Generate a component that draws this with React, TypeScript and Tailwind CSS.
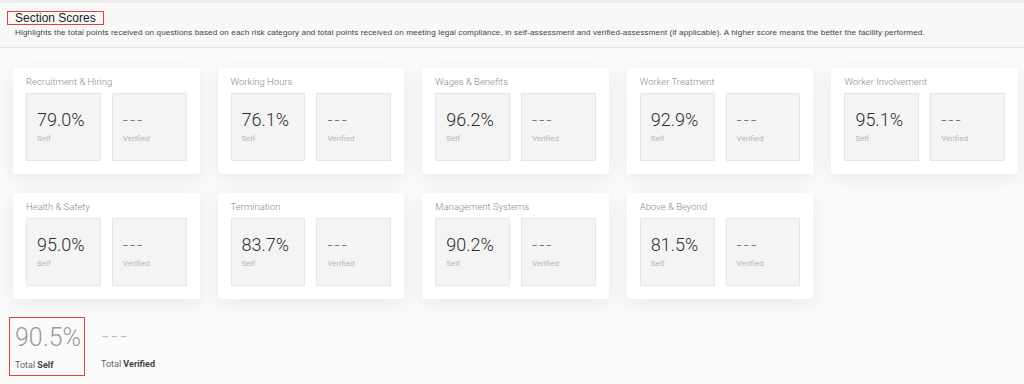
import React from 'react';

type Score = { title: string; self: string };

const row1: Score[] = [
  { title: 'Recruitment & Hiring', self: '79.0%' },
  { title: 'Working Hours', self: '76.1%' },
  { title: 'Wages & Benefits', self: '96.2%' },
  { title: 'Worker Treatment', self: '92.9%' },
  { title: 'Worker Involvement', self: '95.1%' },
];

const row2: Score[] = [
  { title: 'Health & Safety', self: '95.0%' },
  { title: 'Termination', self: '83.7%' },
  { title: 'Management Systems', self: '90.2%' },
  { title: 'Above & Beyond', self: '81.5%' },
];

function ScoreBox({ value, label, muted }: { value: string; label: string; muted?: boolean }) {
  return (
    <div className="flex h-[68px] flex-col border border-[#e6e6e6] bg-[#f4f4f4] pl-[10px] pt-[15px]">
      <div
        className={`h-[22px] text-[18px] font-light leading-[22px] ${
          muted ? 'tracking-[2px] text-[#777]' : 'text-[#2e2e2e]'
        }`}
      >
        {value}
      </div>
      <div className="mt-[3px] text-[8px] leading-[10px] text-[#b5b5b5]">{label}</div>
    </div>
  );
}

function ScoreCard({ s }: { s: Score }) {
  return (
    <div className="rounded-[3px] bg-white px-[13px] pb-[13px] pt-[8px] shadow-[0_4px_18px_rgba(0,0,0,0.07)]">
      <div className="mb-[5px] h-[12px] text-[9.5px] font-light leading-[12px] text-[#8a8a8a]">{s.title}</div>
      <div className="grid grid-cols-2 gap-[11px]">
        <ScoreBox value={s.self} label="Self" />
        <ScoreBox value="---" label="Verified" muted />
      </div>
    </div>
  );
}

export default function App() {
  return (
    <div className="h-[384px] w-[1024px] overflow-hidden bg-[#fafafa] font-['Roboto',sans-serif]">
      {/* Header */}
      <div className="border-t-[3px] border-b border-t-[#ededed] border-b-[#e4e4e4] bg-[#f8f8f8] pb-[9px] pl-[7px] pt-[8px]">
        <div className="w-fit border-[1.5px] border-[#e2403b] px-[7px] font-['Liberation_Sans',sans-serif] text-[12px] leading-[12px] text-[#222]">
          Section Scores
        </div>
        <p className="mt-[3px] pl-[8px] font-['Liberation_Sans',sans-serif] text-[8.1px] leading-[10px] tracking-[0.12px] text-[#444]">
          Highlights the total points received on questions based on each risk category and total points received on meeting legal compliance, in self-assessment and verified-assessment (if applicable). A higher score means the better the facility performed.
        </p>
      </div>

      {/* Cards */}
      <div className="grid grid-cols-5 gap-x-[18px] gap-y-[19px] pl-[13px] pr-[6px] pt-[20px]">
        {row1.map((s) => (
          <ScoreCard key={s.title} s={s} />
        ))}
        {row2.map((s) => (
          <ScoreCard key={s.title} s={s} />
        ))}
      </div>

      {/* Totals */}
      <div className="flex items-start gap-[16px] pl-[9px] pt-[18px]">
        <div className="h-[59px] w-[76px] border-[1.5px] border-[#e2403b] pl-[5px] pt-[5px]">
          <div className="text-[25px] font-light leading-[30px] text-[#9a9a9a]">90.5%</div>
          <div className="mt-[7px] text-[9px] leading-[11px] text-[#666]">
            Total <span className="font-bold text-[#444]">Self</span>
          </div>
        </div>
        <div className="pt-[5px]">
          <div className="pl-[1px] text-[22px] font-light leading-[30px] tracking-[3px] text-[#bbb]">---</div>
          <div className="mt-[7px] text-[9px] leading-[11px] text-[#666]">
            Total <span className="font-bold text-[#444]">Verified</span>
          </div>
        </div>
      </div>
    </div>
  );
}
